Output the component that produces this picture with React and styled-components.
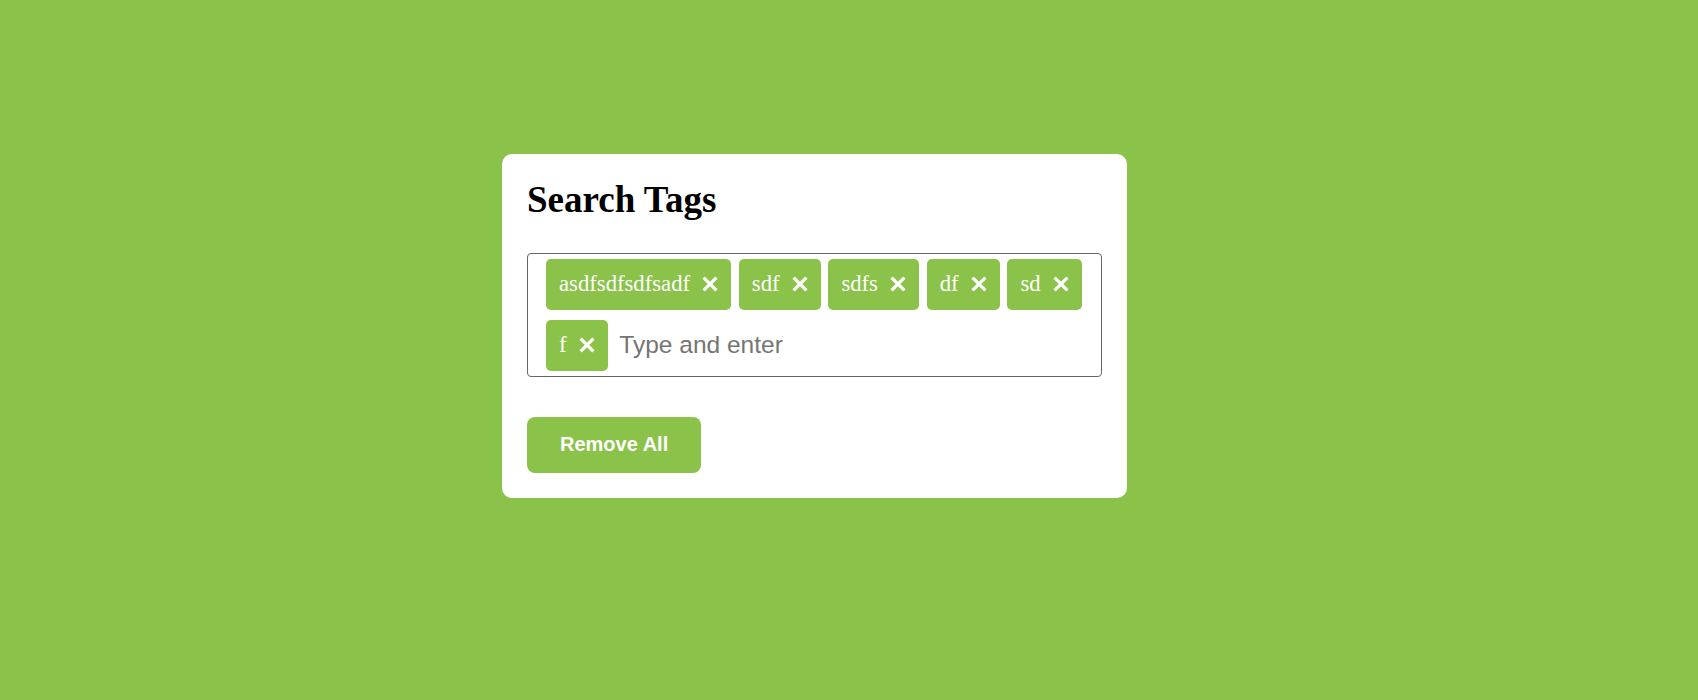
import React, { useState } from 'react';
import styled, { createGlobalStyle } from 'styled-components';

const GlobalStyle = createGlobalStyle`
  html, body {
    margin: 0;
    padding: 0;
    background: #8bc34a;
  }
  * {
    box-sizing: border-box;
  }
`;

const Page = styled.div`
  height: 100vh;
  display: flex;
  justify-content: center;
  align-items: center;
  padding: 0 69px 49px 0;
`;

const Card = styled.div`
  width: 625px;
  background: #fff;
  border-radius: 10px;
  padding: 25px;
`;

const Title = styled.h2`
  margin: 0 0 33px 0;
  font-family: "Liberation Serif", "Times New Roman", serif;
  font-size: 37px;
  line-height: 41px;
  font-weight: bold;
  color: #000;
`;

const TagBox = styled.div`
  display: flex;
  flex-wrap: wrap;
  align-items: center;
  row-gap: 10px;
  column-gap: 7.8px;
  padding: 5px 6px 5px 18px;
  border: 1px solid #666;
  border-radius: 4px;
`;

const Tag = styled.div`
  display: flex;
  align-items: center;
  height: 51px;
  padding: 0 13px 0 13px;
  background: #8bc34a;
  border-radius: 5px;
  color: #fff;
  font-family: "Liberation Serif", "Times New Roman", serif;
  font-size: 22.7px;
`;

const TagText = styled.span`
  margin-right: 12px;
  line-height: 1;
`;

const CloseButton = styled.span`
  display: flex;
  cursor: pointer;
`;

const TagInput = styled.input`
  flex: 1;
  min-width: 150px;
  border: none;
  outline: none;
  padding: 0 4px;
  height: 51px;
  font-family: "Liberation Sans", Arial, sans-serif;
  font-size: 24.5px;
  color: #333;
  background: transparent;

  &::placeholder {
    color: #757575;
  }
`;

const RemoveButton = styled.button`
  margin-top: 40px;
  height: 56px;
  padding: 0 33px;
  border: none;
  border-radius: 8px;
  background: #8bc34a;
  color: #fff;
  font-family: "Liberation Sans", Arial, sans-serif;
  font-size: 20px;
  font-weight: bold;
  cursor: pointer;
`;

const CrossIcon = () => (
  <svg width="16" height="16" viewBox="0 0 16 16">
    <path d="M1.6 1.6 L14.4 14.4 M14.4 1.6 L1.6 14.4" stroke="#fff" strokeWidth="3.2" />
  </svg>
);

export default function App() {
  const [tags, setTags] = useState(['asdfsdfsdfsadf', 'sdf', 'sdfs', 'df', 'sd', 'f']);
  const [value, setValue] = useState('');

  const onKeyDown = (e) => {
    if (e.key === 'Enter' && value.trim()) {
      setTags([...tags, value.trim()]);
      setValue('');
    }
  };

  return (
    <>
      <GlobalStyle />
      <Page>
        <Card>
          <Title>Search Tags</Title>
          <TagBox>
            {tags.map((t, i) => (
              <Tag key={i}>
                <TagText>{t}</TagText>
                <CloseButton onClick={() => setTags(tags.filter((_, j) => j !== i))}>
                  <CrossIcon />
                </CloseButton>
              </Tag>
            ))}
            <TagInput
              placeholder="Type and enter"
              value={value}
              onChange={(e) => setValue(e.target.value)}
              onKeyDown={onKeyDown}
            />
          </TagBox>
          <RemoveButton onClick={() => setTags([])}>Remove All</RemoveButton>
        </Card>
      </Page>
    </>
  );
}
